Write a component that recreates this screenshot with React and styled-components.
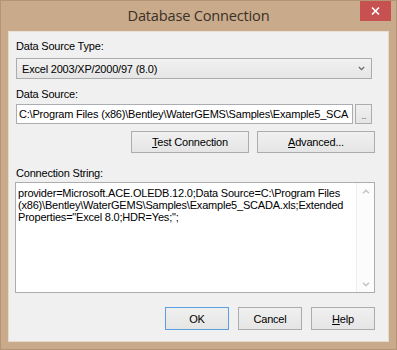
import React from 'react';
import styled, { createGlobalStyle } from 'styled-components';

const GlobalStyle = createGlobalStyle`
    html, body {
        margin: 0;
        padding: 0;
        background: #c8aa8b;
    }
    body {
        font-family: 'Liberation Sans', Arial, sans-serif;
        font-size: 11px;
        letter-spacing: -0.2px;
        color: #000;
    }
`;

const Window = styled.div`
    width: 397px;
    height: 350px;
    box-sizing: border-box;
    background: #c9aa8b;
    border: 1px solid #b39474;
    display: flex;
    flex-direction: column;
`;

const TitleBar = styled.div`
    height: 30px;
    display: grid;
    grid-template-columns: 1fr auto 1fr;
    align-items: start;
`;

const Title = styled.div`
    grid-column: 2;
    font-family: 'Open Sans', 'Noto Sans', sans-serif;
    font-size: 14.6px;
    line-height: 28px;
    color: #3a3128;
    letter-spacing: -0.2px;
`;

const CloseButton = styled.div`
    grid-column: 3;
    justify-self: end;
    margin-right: 5px;
    width: 31px;
    height: 20px;
    background: #c75050;
    display: flex;
    align-items: center;
    justify-content: center;
`;

const Client = styled.div`
    flex: 1;
    margin: 0 7px 7px 7px;
    background: #f0f0f0;
    border: 1px solid #e4dacd;
    border-top-color: #e9dfd3;
    padding: 7px 13px 0 7px;
    display: flex;
    flex-direction: column;
`;

const Label = styled.div`
    line-height: 13px;
    margin-top: ${({ $top }) => $top}px;
`;

const Combo = styled.div`
    margin-top: 5px;
    margin-right: 3px;
    height: 21px;
    box-sizing: border-box;
    border: 1px solid #acacac;
    background: linear-gradient(#f2f2f2, #e5e5e5);
    display: flex;
    align-items: center;
    justify-content: space-between;
    padding: 0 6px 0 5px;
`;

const Row = styled.div`
    display: flex;
    gap: ${({ $gap }) => $gap}px;
    justify-content: ${({ $end }) => ($end ? 'flex-end' : 'flex-start')};
    margin-top: ${({ $top }) => $top}px;
    margin-right: ${({ $right }) => $right || 0}px;
`;

const Input = styled.div`
    flex: 1;
    min-width: 0;
    height: 20px;
    box-sizing: border-box;
    border: 1px solid #abadb3;
    background: #fff;
    padding: 0 2px;
    line-height: 18px;
    white-space: nowrap;
    overflow: hidden;
`;

const Button = styled.div`
    flex: none;
    width: ${({ $w }) => $w}px;
    height: ${({ $h }) => $h}px;
    box-sizing: border-box;
    border: 1px solid ${({ $default }) => ($default ? '#5c9fe0' : '#acacac')};
    background: linear-gradient(#f0f0f0, #e5e5e5);
    display: flex;
    align-items: center;
    justify-content: center;
    color: #000;
`;

const Dots = styled.span`
    color: #7a7a7a;
    font-size: 9px;
    margin-top: 3px;
    letter-spacing: -1px;
`;

const TextArea = styled.div`
    margin-top: 2px;
    margin-left: -1px;
    height: 111px;
    box-sizing: border-box;
    border: 1px solid #adadad;
    background: #fff;
    display: flex;
`;

const TextBody = styled.div`
    flex: 1;
    padding: 4px 0 0 2px;
    line-height: 12px;
    white-space: nowrap;
    overflow: hidden;
`;

const ScrollBar = styled.div`
    width: 17px;
    background: #fcfcfc;
    border-left: 1px solid #ededed;
    display: flex;
    flex-direction: column;
    justify-content: space-between;
    align-items: center;
    padding: 6px 0 5px;
`;

const Chevron = ({ up, color = '#c4c4c4', w = 8, h = 5 }) => (
    <svg width={w} height={h} viewBox="0 0 8 5">
        <path
            d={up ? 'M1 4.2 L4 1.2 L7 4.2' : 'M1 0.8 L4 3.8 L7 0.8'}
            fill="none"
            stroke={color}
            strokeWidth="1.5"
        />
    </svg>
);

const App = () => {
    return (
        <>
            <GlobalStyle />
            <Window>
                <TitleBar>
                    <Title>Database Connection</Title>
                    <CloseButton>
                        <svg width="9" height="8" viewBox="0 0 9 8">
                            <path
                                d="M1 0.5 L8 7.5 M8 0.5 L1 7.5"
                                stroke="#fff"
                                strokeWidth="1.6"
                            />
                        </svg>
                    </CloseButton>
                </TitleBar>
                <Client>
                    <Label $top={1}>Data Source Type:</Label>
                    <Combo>
                        <span>Excel 2003/XP/2000/97 (8.0)</span>
                        <Chevron color="#6d6d6d" w={7} h={5} />
                    </Combo>
                    <Label $top={9}>Data Source:</Label>
                    <Row $top={3} $gap={2} $right={3}>
                        <Input>
                            C:\Program Files (x86)\Bentley\WaterGEMS\Samples\Example5_SCA
                        </Input>
                        <Button $w={17} $h={20}>
                            <Dots>...</Dots>
                        </Button>
                    </Row>
                    <Row $top={7} $gap={8} $end>
                        <Button $w={118} $h={22}>
                            <span>
                                <u>T</u>est Connection
                            </span>
                        </Button>
                        <Button $w={118} $h={22}>
                            <span>
                                <u>A</u>dvanced...
                            </span>
                        </Button>
                    </Row>
                    <Label $top={14}>Connection String:</Label>
                    <TextArea>
                        <TextBody>
                            provider=Microsoft.ACE.OLEDB.12.0;Data Source=C:\Program Files
                            <br />
                            (x86)\Bentley\WaterGEMS\Samples\Example5_SCADA.xls;Extended
                            <br />
                            Properties="Excel 8.0;HDR=Yes;";
                        </TextBody>
                        <ScrollBar>
                            <Chevron up />
                            <Chevron />
                        </ScrollBar>
                    </TextArea>
                    <Row $top={14} $gap={9} $end>
                        <Button $w={64} $h={23} $default>
                            OK
                        </Button>
                        <Button $w={64} $h={23}>
                            Cancel
                        </Button>
                        <Button $w={64} $h={23}>
                            <span>
                                <u>H</u>elp
                            </span>
                        </Button>
                    </Row>
                </Client>
            </Window>
        </>
    );
};

export default App;
